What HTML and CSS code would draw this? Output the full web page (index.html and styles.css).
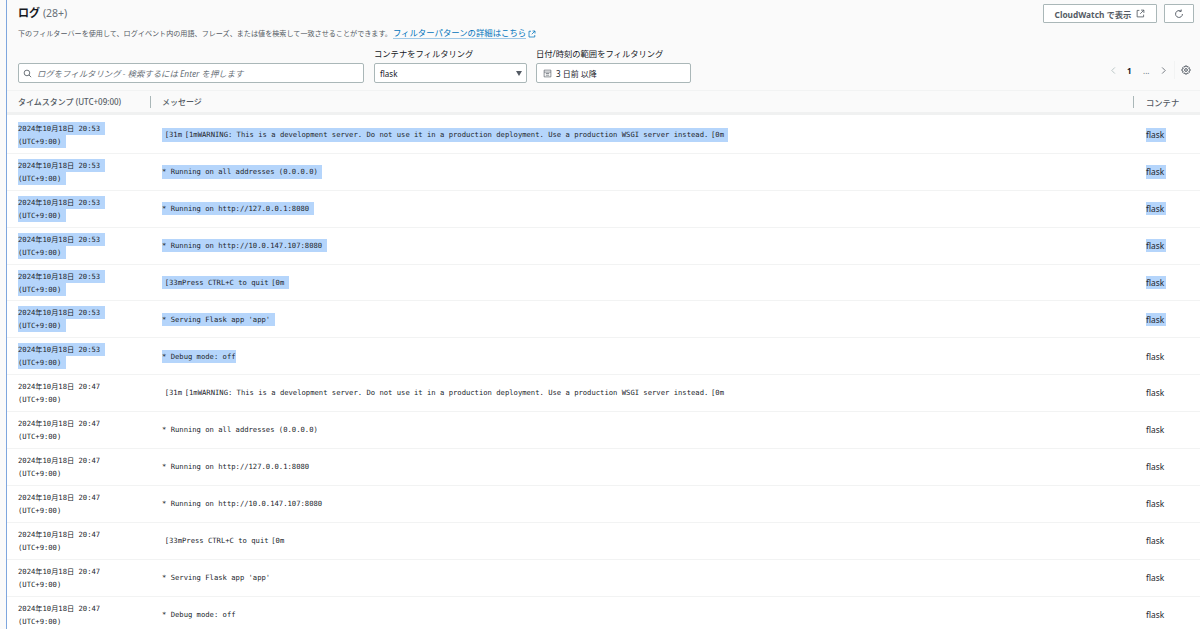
FILE: index.html
```html
<!DOCTYPE html>
<html lang="ja">
<head>
<meta charset="utf-8">
<title>ログ</title>
<link rel="stylesheet" href="styles.css">
</head>
<body>
<main class="panel">
  <header class="head">
    <div class="head-top">
      <h1 class="title">ログ <span class="count">(28+)</span></h1>
      <div class="actions">
        <button class="btn btn-cw">CloudWatch で表示
          <svg class="ico" viewBox="0 0 16 16"><path d="M9 2H14V7M14 2L7.5 8.5M6 2.5H2V14H13.5V10"/></svg>
        </button>
        <button class="btn btn-refresh" aria-label="更新">
          <svg class="ico ico-lg" viewBox="0 0 16 16"><path d="M13.5 8A5.5 5.5 0 1 1 11 3.4M11.5 0.8V3.8H8.5"/></svg>
        </button>
      </div>
    </div>
    <p class="desc">下のフィルターバーを使用して、ログイベント内の用語、フレーズ、または値を検索して一致させることができます。<a class="link" href="#">フィルターパターンの詳細はこちら</a> <svg class="ico ico-link" viewBox="0 0 16 16"><path d="M9 2H14V7M14 2L7.5 8.5M6 2.5H2V14H13.5V10"/></svg></p>
    <div class="filters">
      <div class="search">
        <svg class="ico ico-search" viewBox="0 0 16 16"><circle cx="7" cy="7" r="5"/><path d="M10.5 10.5L14.5 14.5"/></svg>
        <span class="placeholder">ログをフィルタリング - 検索するには Enter を押します</span>
      </div>
      <div class="field field-select">
        <label class="label">コンテナをフィルタリング</label>
        <div class="control control-select"><span>flask</span><span class="caret"></span></div>
      </div>
      <div class="field field-date">
        <label class="label">日付/時刻の範囲をフィルタリング</label>
        <div class="control">
          <svg class="ico ico-cal" viewBox="0 0 16 16"><path d="M2 2H14V14H2ZM2 5.5H14M5 8H11M5 11H11"/></svg>
          <span>3 日前 以降</span>
        </div>
      </div>
      <nav class="pager">
        <svg class="ico ico-chev muted" viewBox="0 0 16 16"><path d="M10.5 2.5L5 8L10.5 13.5"/></svg>
        <span class="page-num">1</span>
        <span class="page-more">...</span>
        <svg class="ico ico-chev" viewBox="0 0 16 16"><path d="M5.5 2.5L11 8L5.5 13.5"/></svg>
        <span class="page-div"></span>
        <svg class="ico ico-gear" viewBox="0 0 16 16"><circle cx="8" cy="8" r="2.2"/><path d="M6.8 1.5H9.2L9.7 3.3L11.3 2.4L13.2 4.3L12.5 5.9L14.5 6.6V9.4L12.6 10L13.3 11.7L11.5 13.5L9.8 12.7L9.2 14.5H6.8L6.2 12.7L4.5 13.5L2.7 11.7L3.4 10L1.5 9.4V6.6L3.5 5.9L2.8 4.3L4.7 2.4L6.3 3.3Z"/></svg>
      </nav>
    </div>
  </header>

  <div class="thead">
    <div class="c-time th">タイムスタンプ (UTC+09:00)</div>
    <div class="c-msg th"><span class="sep"></span>メッセージ</div>
    <div class="c-cont th"><span class="sep"></span>コンテナ</div>
  </div>

  <div class="rows">
    <div class="row sel"><div class="c-time"><span class="d d1">2024年10月18日 20:53</span><span class="d d2">(UTC+9:00)</span></div><div class="c-msg"><span class="m"><i class="esc"></i>[31m<i class="esc"></i>[1mWARNING: This is a development server. Do not use it in a production deployment. Use a production WSGI server instead.<i class="esc"></i>[0m</span></div><div class="c-cont"><span class="f">flask</span></div></div>
    <div class="row sel"><div class="c-time"><span class="d d1">2024年10月18日 20:53</span><span class="d d2">(UTC+9:00)</span></div><div class="c-msg"><span class="m">* Running on all addresses (0.0.0.0)</span></div><div class="c-cont"><span class="f">flask</span></div></div>
    <div class="row sel"><div class="c-time"><span class="d d1">2024年10月18日 20:53</span><span class="d d2">(UTC+9:00)</span></div><div class="c-msg"><span class="m">* Running on http://127.0.0.1:8080</span></div><div class="c-cont"><span class="f">flask</span></div></div>
    <div class="row sel"><div class="c-time"><span class="d d1">2024年10月18日 20:53</span><span class="d d2">(UTC+9:00)</span></div><div class="c-msg"><span class="m">* Running on http://10.0.147.107:8080</span></div><div class="c-cont"><span class="f">flask</span></div></div>
    <div class="row sel"><div class="c-time"><span class="d d1">2024年10月18日 20:53</span><span class="d d2">(UTC+9:00)</span></div><div class="c-msg"><span class="m"><i class="esc"></i>[33mPress CTRL+C to quit<i class="esc"></i>[0m</span></div><div class="c-cont"><span class="f">flask</span></div></div>
    <div class="row sel"><div class="c-time"><span class="d d1">2024年10月18日 20:53</span><span class="d d2">(UTC+9:00)</span></div><div class="c-msg"><span class="m">* Serving Flask app 'app'</span></div><div class="c-cont"><span class="f">flask</span></div></div>
    <div class="row sel sel-end"><div class="c-time"><span class="d d1">2024年10月18日 20:53</span><span class="d d2">(UTC+9:00)</span></div><div class="c-msg"><span class="m">* Debug mode: off</span></div><div class="c-cont"><span class="f">flask</span></div></div>
    <div class="row"><div class="c-time"><span class="d d1">2024年10月18日 20:47</span><span class="d d2">(UTC+9:00)</span></div><div class="c-msg"><span class="m"><i class="esc"></i>[31m<i class="esc"></i>[1mWARNING: This is a development server. Do not use it in a production deployment. Use a production WSGI server instead.<i class="esc"></i>[0m</span></div><div class="c-cont"><span class="f">flask</span></div></div>
    <div class="row"><div class="c-time"><span class="d d1">2024年10月18日 20:47</span><span class="d d2">(UTC+9:00)</span></div><div class="c-msg"><span class="m">* Running on all addresses (0.0.0.0)</span></div><div class="c-cont"><span class="f">flask</span></div></div>
    <div class="row"><div class="c-time"><span class="d d1">2024年10月18日 20:47</span><span class="d d2">(UTC+9:00)</span></div><div class="c-msg"><span class="m">* Running on http://127.0.0.1:8080</span></div><div class="c-cont"><span class="f">flask</span></div></div>
    <div class="row"><div class="c-time"><span class="d d1">2024年10月18日 20:47</span><span class="d d2">(UTC+9:00)</span></div><div class="c-msg"><span class="m">* Running on http://10.0.147.107:8080</span></div><div class="c-cont"><span class="f">flask</span></div></div>
    <div class="row"><div class="c-time"><span class="d d1">2024年10月18日 20:47</span><span class="d d2">(UTC+9:00)</span></div><div class="c-msg"><span class="m"><i class="esc"></i>[33mPress CTRL+C to quit<i class="esc"></i>[0m</span></div><div class="c-cont"><span class="f">flask</span></div></div>
    <div class="row"><div class="c-time"><span class="d d1">2024年10月18日 20:47</span><span class="d d2">(UTC+9:00)</span></div><div class="c-msg"><span class="m">* Serving Flask app 'app'</span></div><div class="c-cont"><span class="f">flask</span></div></div>
    <div class="row"><div class="c-time"><span class="d d1">2024年10月18日 20:47</span><span class="d d2">(UTC+9:00)</span></div><div class="c-msg"><span class="m">* Debug mode: off</span></div><div class="c-cont"><span class="f">flask</span></div></div>
  </div>
</main>
</body>
</html>
```

FILE: styles.css
```css
* { box-sizing: border-box; }
html, body { margin: 0; height: 100%; overflow: hidden; }
body {
  background: #fafafa;
  color: #16191f;
  font-family: "Noto Sans", "Noto Sans CJK JP", sans-serif;
  font-size: 8px;
}
.panel {
  margin-left: 6px;
  height: 629px;
  overflow: hidden;
  border-left: 1px solid #7ea6de;
  background: #fafafa;
}
.head { padding: 4px 6px 0 11px; height: 91px; border-bottom: 1px solid #f2f3f3; }
.head-top { display: flex; justify-content: space-between; align-items: flex-start; height: 20px; }
.title { margin: 0; font-size: 11px; font-weight: 700; line-height: 18px; }
.count { font-weight: 400; color: #687078; font-size: 10.5px; }
.actions { display: flex; gap: 7px; }
.btn {
  height: 19px;
  border: 1px solid #aab7b8;
  background: #fff;
  color: #545b64;
  font: 700 8.3px "Noto Sans", "Noto Sans CJK JP", sans-serif;
  display: flex;
  align-items: center;
  justify-content: center;
  border-radius: 1px;
  padding: 0;
}
.btn-cw { width: 114px; gap: 5px; margin-left: 1px; }
.btn-refresh { width: 30px; }
.ico { width: 9px; height: 9px; fill: none; stroke: #545b64; stroke-width: 1.5; flex: none; }
.ico-lg { width: 10px; height: 10px; }
.desc { margin: 4px 0 0; font-size: 7.1px; line-height: 11px; color: #545b64; display: flex; align-items: center; white-space: nowrap; }
.link { color: #0073bb; font-size: 8.4px; text-decoration: none; border-bottom: 1px solid #9fc8e6; line-height: 10px; margin-left: 1px; }
.ico-link { width: 8px; height: 8px; stroke: #0073bb; margin-left: 2px; }
.filters { display: flex; align-items: flex-end; margin-top: 9px; height: 35px; }
.label { display: block; font-size: 8.3px; line-height: 11px; height: 15px; color: #16191f; }
.search, .control {
  height: 20px;
  border: 1px solid #aab7b8;
  border-radius: 2px;
  background: #fff;
  display: flex;
  align-items: center;
}
.search { width: 346px; padding-left: 4px; gap: 5px; }
.placeholder { font-style: italic; color: #687078; font-size: 8.4px; }
.ico-search { width: 9px; height: 9px; }
.field-select { width: 153px; margin-left: 10px; }
.field-date { width: 155px; margin-left: 9px; }
.control { padding: 0 5px; font-size: 8px; }
.control-select { justify-content: space-between; padding-right: 4px; }
.caret { width: 0; height: 0; border-left: 3.5px solid transparent; border-right: 3.5px solid transparent; border-top: 5px solid #545b64; }
.ico-cal { width: 9px; height: 9px; stroke-width: 1.2; margin-right: 4px; margin-left: 1px; }
.pager { margin-left: auto; margin-right: 3px; display: flex; align-items: center; height: 20px; margin-bottom: 3px; }
.ico-chev { width: 9px; height: 9px; stroke-width: 1.4; }
.muted { stroke: #aab7b8; }
.page-num { font-weight: 700; margin-left: 9.5px; width: 6px; }
.page-more { color: #687078; margin-left: 10px; width: 9px; }
.page-more + .ico { margin-left: 7px; }
.page-div { width: 1px; height: 18px; background: #f2f3f3; margin: 0 6px; }
.ico-gear { width: 10px; height: 10px; stroke-width: 1.6; }
.thead { display: flex; height: 24px; align-items: center; border-bottom: 3px solid #f0f1f1; }
.th { font-size: 8px; font-weight: 500; color: #545b64; display: flex; align-items: center; white-space: nowrap; }
.sep { width: 1px; height: 12px; background: #aab7b8; margin-right: 11px; margin-left: -12px; }
.c-time { width: 155px; padding-left: 11px; flex: none; }
.c-msg { flex: 1; min-width: 0; padding-left: 0; }
.c-cont { width: 54px; flex: none; }
.thead .c-cont { font-size: 8.3px; }
.thead .c-cont .sep { margin-left: -13px; margin-right: 12px; }
.rows { background: #fff; padding-top: 2px; }
.row { display: flex; height: 36.9px; align-items: center; border-bottom: 1px solid #f2f3f3; background: #fff; }
.row .c-time { display: flex; flex-direction: column; align-items: flex-start; }
.d, .m { font-family: "DejaVu Sans Mono", "Noto Sans CJK JP", monospace; font-size: 7.2px; line-height: 13px; white-space: nowrap; color: #22262c; }
.d { display: block; height: 13px; }
.m { display: inline-block; height: 13.5px; }
.f { display: inline-block; font-size: 8.4px; line-height: 13.5px; color: #22262c; }
.esc { display: inline-block; width: 2.7px; }
.sel .d, .sel .m, .sel .f { background: #b5d5fb; }
.sel .d1 { padding-right: 4.5px; }
.sel .d2 { padding-right: 4.5px; }
.sel .m { padding-right: 4.5px; }
.sel .f { padding-right: 2px; }
.sel-end .m { padding-right: 0; }
.sel-end .f { background: none; }
```
